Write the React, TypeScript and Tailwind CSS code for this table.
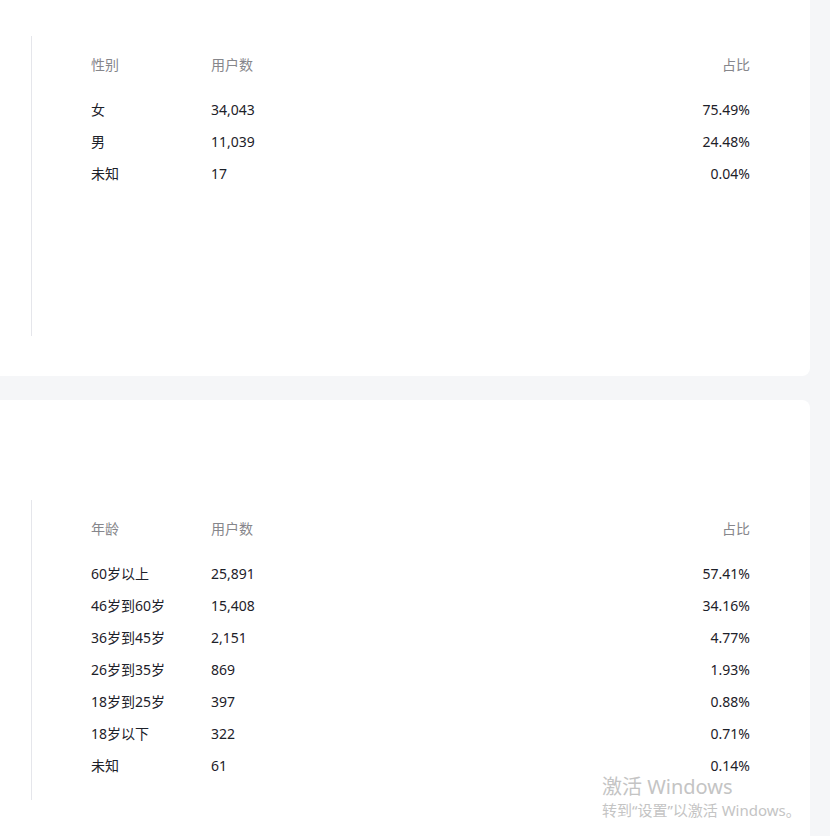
import React from "react";

type Row = { label: string; count: string; pct: string };

const genderRows: Row[] = [
  { label: "女", count: "34,043", pct: "75.49%" },
  { label: "男", count: "11,039", pct: "24.48%" },
  { label: "未知", count: "17", pct: "0.04%" },
];

const ageRows: Row[] = [
  { label: "60岁以上", count: "25,891", pct: "57.41%" },
  { label: "46岁到60岁", count: "15,408", pct: "34.16%" },
  { label: "36岁到45岁", count: "2,151", pct: "4.77%" },
  { label: "26岁到35岁", count: "869", pct: "1.93%" },
  { label: "18岁到25岁", count: "397", pct: "0.88%" },
  { label: "18岁以下", count: "322", pct: "0.71%" },
  { label: "未知", count: "61", pct: "0.14%" },
];

function StatTable({ title, rows }: { title: string; rows: Row[] }) {
  return (
    <div className="ml-[31px] h-[300px] border-l border-[#e5e6eb] pl-[59px] pr-[60px] pt-[12px]">
      <div className="flex h-8 items-center text-[#86868b]">
        <div className="w-[120px]">{title}</div>
        <div className="flex-1">用户数</div>
        <div className="text-right">占比</div>
      </div>
      <div className="mt-[13px]">
        {rows.map((r) => (
          <div key={r.label} className="flex h-8 items-center text-[#1d2129]">
            <div className="w-[120px]">{r.label}</div>
            <div className="flex-1">{r.count}</div>
            <div className="text-right">{r.pct}</div>
          </div>
        ))}
      </div>
    </div>
  );
}

export default function App() {
  return (
    <div
      className="relative h-[836px] w-[830px] overflow-hidden bg-[#f5f6f8] text-[14px]"
      style={{ fontFamily: '"Noto Sans", "Noto Sans CJK SC", sans-serif' }}
    >
      <div className="flex w-[810px] flex-col gap-6">
        <div className="h-[376px] rounded-br-lg bg-white pt-9">
          <StatTable title="性别" rows={genderRows} />
        </div>
        <div className="h-[440px] rounded-tr-lg bg-white pt-[100px]">
          <StatTable title="年龄" rows={ageRows} />
        </div>
      </div>

      <div className="absolute left-[602px] top-[774px] leading-tight text-[#c4c4c4]">
        <div className="text-[20px]">激活 Windows</div>
        <div className="mt-[2px] text-[15px]">转到“设置”以激活 Windows。</div>
      </div>
    </div>
  );
}
